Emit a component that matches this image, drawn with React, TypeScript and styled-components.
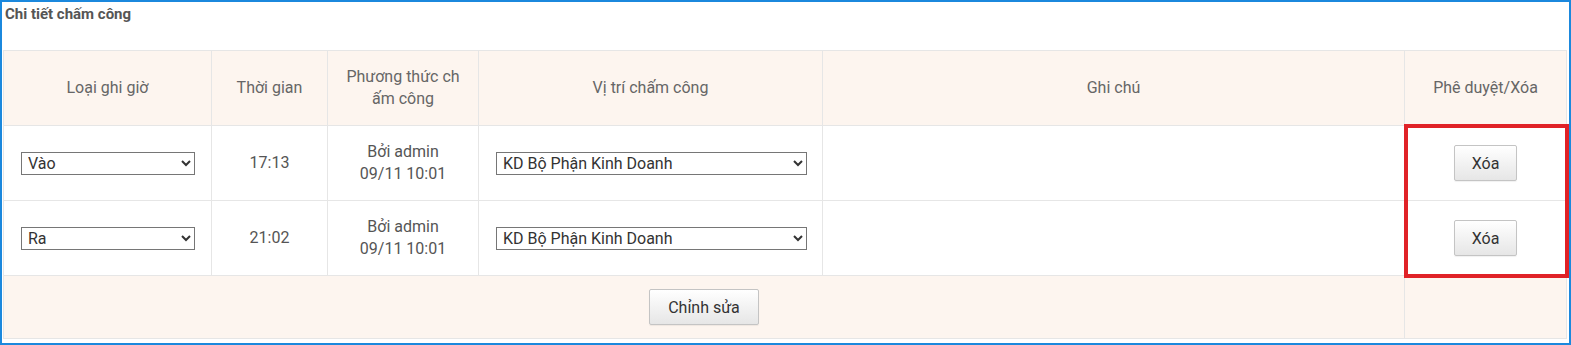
import React from 'react';
import styled, { createGlobalStyle } from 'styled-components';

const GlobalStyle = createGlobalStyle`
  html, body {
    margin: 0;
    padding: 0;
    background: #ffffff;
  }
  * {
    box-sizing: border-box;
  }
`;

const Panel = styled.div`
  position: relative;
  width: 1571px;
  height: 345px;
  border: 2px solid #1b88dd;
  padding: 0 3px 0 1px;
  background: #ffffff;
  font-family: Roboto, 'Noto Sans', sans-serif;
`;

const PanelTitle = styled.div`
  height: 48px;
  padding: 4px 0 0 2px;
  font-size: 15px;
  font-weight: 700;
  line-height: 17px;
  color: #555555;
`;

const Table = styled.table`
  width: 1563px;
  border-collapse: collapse;
  table-layout: fixed;
`;

const HeadCell = styled.th`
  height: 75px;
  padding: 0 15px;
  background: #fdf5ef;
  border: 1px solid #e6e6e6;
  font-size: 16px;
  font-weight: 400;
  line-height: 22px;
  color: #666666;
  text-align: center;
  vertical-align: middle;
  word-break: break-all;
`;

const Cell = styled.td<{ $align?: string }>`
  height: 75px;
  padding: 0 17px;
  border: 1px solid #e6e6e6;
  font-size: 16px;
  line-height: 22px;
  color: #555555;
  text-align: ${({ $align }) => $align || 'center'};
  vertical-align: middle;
`;

const FootCell = styled.td`
  height: 63px;
  background: #fdf5ef;
  border: 1px solid #e6e6e6;
  text-align: center;
  vertical-align: middle;
`;

const Select = styled.select<{ $width: number }>`
  display: block;
  width: ${({ $width }) => $width}px;
  height: 23px;
  padding: 0 2px;
  border: 1px solid #767676;
  border-radius: 0;
  background: #ffffff;
  font-family: Roboto, 'Noto Sans', sans-serif;
  font-size: 16px;
  color: #333333;
`;

const Button = styled.button<{ $width: number }>`
  width: ${({ $width }) => $width}px;
  height: 36px;
  border: 1px solid #c4c4c4;
  border-radius: 2px;
  background: linear-gradient(#ffffff, #e6e6e6);
  box-shadow: 0 1px 1px rgba(0, 0, 0, 0.06);
  font-family: Roboto, 'Noto Sans', sans-serif;
  font-size: 16px;
  color: #333333;
  cursor: pointer;
`;

const Highlight = styled.div`
  position: absolute;
  left: 1402px;
  top: 122px;
  width: 165px;
  height: 154px;
  border: 4px solid #e02227;
  pointer-events: none;
`;

const ROWS = [
  { kind: 'Vào', time: '17:13' },
  { kind: 'Ra', time: '21:02' },
];

const App = () => {
  return (
    <>
      <GlobalStyle />
      <Panel>
        <PanelTitle>Chi tiết chấm công</PanelTitle>
        <Table>
          <colgroup>
            <col style={{ width: 208 }} />
            <col style={{ width: 116 }} />
            <col style={{ width: 151 }} />
            <col style={{ width: 344 }} />
            <col style={{ width: 582 }} />
            <col style={{ width: 162 }} />
          </colgroup>
          <thead>
            <tr>
              <HeadCell>Loại ghi giờ</HeadCell>
              <HeadCell>Thời gian</HeadCell>
              <HeadCell>Phương thức chấm công</HeadCell>
              <HeadCell>Vị trí chấm công</HeadCell>
              <HeadCell>Ghi chú</HeadCell>
              <HeadCell>Phê duyệt/Xóa</HeadCell>
            </tr>
          </thead>
          <tbody>
            {ROWS.map((row) => (
              <tr key={row.kind}>
                <Cell $align="left">
                  <Select $width={174} defaultValue={row.kind}>
                    <option>Vào</option>
                    <option>Ra</option>
                  </Select>
                </Cell>
                <Cell>{row.time}</Cell>
                <Cell>
                  Bởi admin
                  <br />
                  09/11 10:01
                </Cell>
                <Cell $align="left">
                  <Select $width={311}>
                    <option>KD Bộ Phận Kinh Doanh</option>
                  </Select>
                </Cell>
                <Cell />
                <Cell>
                  <Button $width={63}>Xóa</Button>
                </Cell>
              </tr>
            ))}
            <tr>
              <FootCell colSpan={5}>
                <Button $width={110}>Chỉnh sửa</Button>
              </FootCell>
              <FootCell />
            </tr>
          </tbody>
        </Table>
        <Highlight />
      </Panel>
    </>
  );
};

export default App;
